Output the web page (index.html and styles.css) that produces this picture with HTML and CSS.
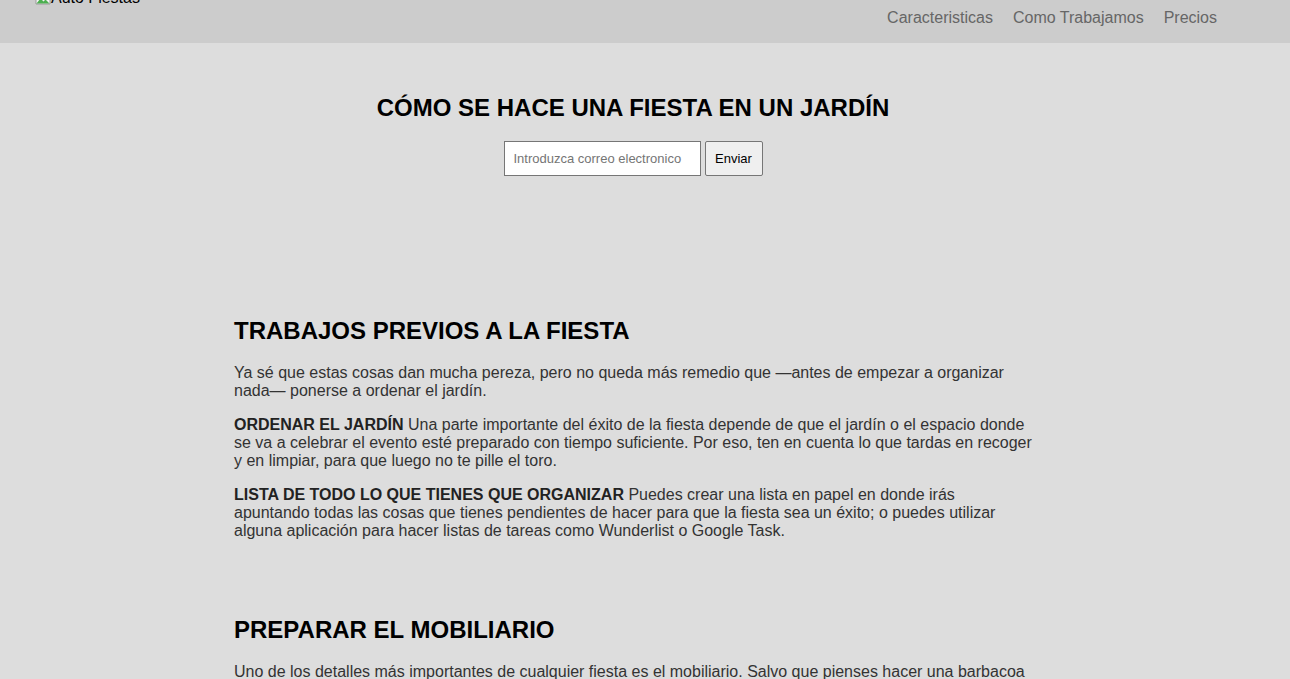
FILE: index.html
```html
<!DOCTYPE html>
<html lang="es">
<head>
<meta charset="utf-8">
<title>Auto Fiestas</title>
<link rel="stylesheet" href="styles.css">
</head>
<body>
<header class="header">
  <div class="logo">
    <svg class="logo-icon" width="16" height="16" viewBox="0 0 16 16" aria-hidden="true">
      <path d="M1 1h10l4 4v10H1z" fill="#f4f4f4" stroke="#9a9a9a" stroke-width="1"/>
      <path d="M1.5 14.5l4-5 3 3 2-2 4 4z" fill="#4caf50"/>
    </svg>
    <span class="logo-text">Auto Fiestas</span>
  </div>
  <nav class="nav">
    <a href="#" class="nav-link">Caracteristicas</a>
    <a href="#" class="nav-link">Como Trabajamos</a>
    <a href="#" class="nav-link">Precios</a>
  </nav>
</header>
<main class="page">
  <section class="hero">
    <h1 class="hero-title">CÓMO SE HACE UNA FIESTA EN UN JARDÍN</h1>
    <form class="signup">
      <input class="signup-input" type="email" placeholder="Introduzca correo electronico">
      <button class="signup-button" type="button">Enviar</button>
    </form>
  </section>
  <section class="article">
    <h2 class="article-title">TRABAJOS PREVIOS A LA FIESTA</h2>
    <p>Ya sé que estas cosas dan mucha pereza, pero no queda más remedio que —antes de empezar a organizar nada— ponerse a ordenar el jardín.</p>
    <p><strong>ORDENAR EL JARDÍN</strong> Una parte importante del éxito de la fiesta depende de que el jardín o el espacio donde se va a celebrar el evento esté preparado con tiempo suficiente. Por eso, ten en cuenta lo que tardas en recoger y en limpiar, para que luego no te pille el toro.</p>
    <p><strong>LISTA DE TODO LO QUE TIENES QUE ORGANIZAR</strong> Puedes crear una lista en papel en donde irás apuntando todas las cosas que tienes pendientes de hacer para que la fiesta sea un éxito; o puedes utilizar alguna aplicación para hacer listas de tareas como Wunderlist o Google Task.</p>
  </section>
  <section class="article">
    <h2 class="article-title">PREPARAR EL MOBILIARIO</h2>
    <p>Uno de los detalles más importantes de cualquier fiesta es el mobiliario. Salvo que pienses hacer una barbacoa informal en la que todos los invitados estén de pie, necesitarás mesas y sillas suficientes para todos.</p>
  </section>
</main>
</body>
</html>
```
FILE: styles.css
```css
* { box-sizing: border-box; }
html, body { margin: 0; padding: 0; }
body {
  font-family: "Liberation Sans", Arial, sans-serif;
  background: #dddddd;
  color: #333333;
  font-size: 16px;
}
.header {
  height: 43px;
  background: #cccccc;
  display: flex;
  justify-content: space-between;
  align-items: flex-start;
  padding: 0 73px 0 35px;
}
.logo {
  display: flex;
  align-items: flex-end;
  margin-top: -11px;
  color: #000;
  font-size: 16px;
  line-height: 18px;
}
.logo-icon { display: block; margin-bottom: 2px; }
.nav {
  display: flex;
  gap: 20px;
  padding-top: 9px;
}
.nav-link {
  color: #666666;
  text-decoration: none;
  font-size: 16px;
  line-height: 18px;
}
.page {
  padding-right: 22px;
}
.hero {
  text-align: center;
  padding-top: 51px;
  padding-right: 2px;
}
.hero-title {
  margin: 0 0 19px;
  font-size: 24px;
  line-height: 28px;
  color: #000;
}
.signup {
  display: flex;
  justify-content: center;
  gap: 4px;
}
.signup-input {
  width: 197px;
  height: 35px;
  border: 1px solid #767676;
  background: #fff;
  padding: 0 9px;
  font-family: "Liberation Sans", Arial, sans-serif;
  font-size: 13px;
  border-radius: 0;
}
.signup-input::placeholder { color: #757575; }
.signup-button {
  width: 58px;
  height: 35px;
  border: 1px solid #767676;
  border-radius: 2px;
  background: #efefef;
  font-family: "Liberation Sans", Arial, sans-serif;
  font-size: 13px;
  color: #000;
}
.article {
  width: 800px;
  margin: 0 auto;
  padding-top: 140px;
}
.article + .article { padding-top: 59px; }
.article-title {
  margin: 0 0 18px;
  font-size: 24px;
  line-height: 30px;
  color: #000;
}
.article p {
  margin: 0 0 16px;
  line-height: normal;
}
.article strong { color: #222; }
```
